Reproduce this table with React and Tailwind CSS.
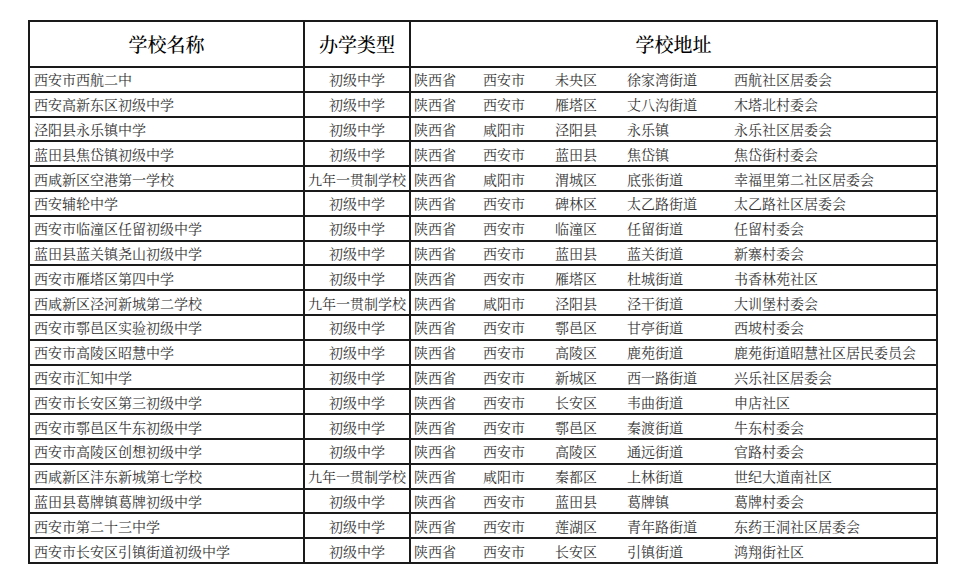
import React from 'react';

const rows = [
  ['西安市西航二中', '初级中学', '陕西省', '西安市', '未央区', '徐家湾街道', '西航社区居委会'],
  ['西安高新东区初级中学', '初级中学', '陕西省', '西安市', '雁塔区', '丈八沟街道', '木塔北村委会'],
  ['泾阳县永乐镇中学', '初级中学', '陕西省', '咸阳市', '泾阳县', '永乐镇', '永乐社区居委会'],
  ['蓝田县焦岱镇初级中学', '初级中学', '陕西省', '西安市', '蓝田县', '焦岱镇', '焦岱街村委会'],
  ['西咸新区空港第一学校', '九年一贯制学校', '陕西省', '咸阳市', '渭城区', '底张街道', '幸福里第二社区居委会'],
  ['西安辅轮中学', '初级中学', '陕西省', '西安市', '碑林区', '太乙路街道', '太乙路社区居委会'],
  ['西安市临潼区任留初级中学', '初级中学', '陕西省', '西安市', '临潼区', '任留街道', '任留村委会'],
  ['蓝田县蓝关镇尧山初级中学', '初级中学', '陕西省', '西安市', '蓝田县', '蓝关街道', '新寨村委会'],
  ['西安市雁塔区第四中学', '初级中学', '陕西省', '西安市', '雁塔区', '杜城街道', '书香林苑社区'],
  ['西咸新区泾河新城第二学校', '九年一贯制学校', '陕西省', '咸阳市', '泾阳县', '泾干街道', '大训堡村委会'],
  ['西安市鄠邑区实验初级中学', '初级中学', '陕西省', '西安市', '鄠邑区', '甘亭街道', '西坡村委会'],
  ['西安市高陵区昭慧中学', '初级中学', '陕西省', '西安市', '高陵区', '鹿苑街道', '鹿苑街道昭慧社区居民委员会'],
  ['西安市汇知中学', '初级中学', '陕西省', '西安市', '新城区', '西一路街道', '兴乐社区居委会'],
  ['西安市长安区第三初级中学', '初级中学', '陕西省', '西安市', '长安区', '韦曲街道', '申店社区'],
  ['西安市鄠邑区牛东初级中学', '初级中学', '陕西省', '西安市', '鄠邑区', '秦渡街道', '牛东村委会'],
  ['西安市高陵区创想初级中学', '初级中学', '陕西省', '西安市', '高陵区', '通远街道', '官路村委会'],
  ['西咸新区沣东新城第七学校', '九年一贯制学校', '陕西省', '咸阳市', '秦都区', '上林街道', '世纪大道南社区'],
  ['蓝田县葛牌镇葛牌初级中学', '初级中学', '陕西省', '西安市', '蓝田县', '葛牌镇', '葛牌村委会'],
  ['西安市第二十三中学', '初级中学', '陕西省', '西安市', '莲湖区', '青年路街道', '东药王洞社区居委会'],
  ['西安市长安区引镇街道初级中学', '初级中学', '陕西省', '西安市', '长安区', '引镇街道', '鸿翔街社区'],
];

const font = { fontFamily: '"Noto Serif CJK SC", "Noto Sans CJK SC", serif' };

export default function App() {
  return (
    <div className="w-[960px] h-[584px] bg-white pt-[20px] pl-[28px]" style={font}>
      <table className="w-[910px] table-fixed border-collapse border-2 border-[#1a1a1a] text-[#333]">
        <colgroup>
          <col className="w-[275px]" />
          <col className="w-[106px]" />
          <col className="w-[71px]" />
          <col className="w-[72px]" />
          <col className="w-[72px]" />
          <col className="w-[107px]" />
          <col />
        </colgroup>
        <thead>
          <tr className="h-[46px] text-[19px] text-black">
            <th className="border-2 border-[#1a1a1a] font-medium">学校名称</th>
            <th className="border-2 border-[#1a1a1a] font-medium">办学类型</th>
            <th colSpan={5} className="border-2 border-[#1a1a1a] font-medium">学校地址</th>
          </tr>
        </thead>
        <tbody>
          {rows.map((r, i) => (
            <tr key={i} className="h-[24.8px] text-[14px] leading-none border-b-2 border-[#1a1a1a]">
              <td className="border-r-2 border-[#1a1a1a] pl-[4px] whitespace-nowrap">{r[0]}</td>
              <td className="border-r-2 border-[#1a1a1a] text-center whitespace-nowrap">{r[1]}</td>
              <td className="pl-[3px] whitespace-nowrap">{r[2]}</td>
              <td className="pl-[2px] whitespace-nowrap">{r[3]}</td>
              <td className="pl-[2px] whitespace-nowrap">{r[4]}</td>
              <td className="pl-[2px] whitespace-nowrap">{r[5]}</td>
              <td className="pl-[2px] whitespace-nowrap">{r[6]}</td>
            </tr>
          ))}
        </tbody>
      </table>
    </div>
  );
}
